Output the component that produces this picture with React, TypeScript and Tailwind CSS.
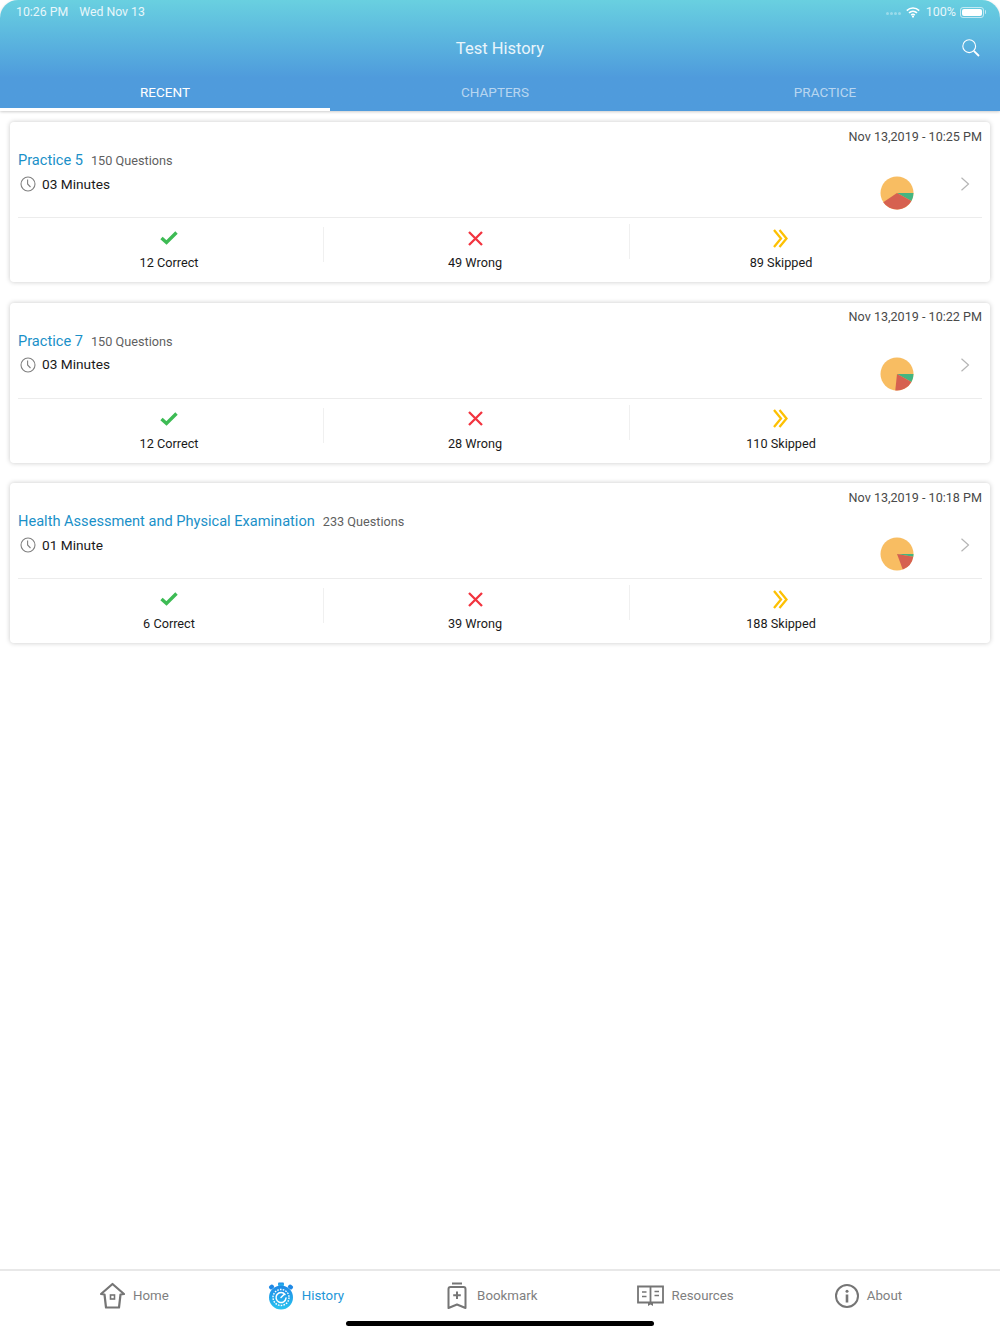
const tests = [
  { title: 'Practice 5', questions: 150, time: '03 Minutes', date: 'Nov 13,2019 - 10:25 PM', correct: 12, wrong: 49, skipped: 89 },
  { title: 'Practice 7', questions: 150, time: '03 Minutes', date: 'Nov 13,2019 - 10:22 PM', correct: 12, wrong: 28, skipped: 110 },
  { title: 'Health Assessment and Physical Examination', questions: 233, time: '01 Minute', date: 'Nov 13,2019 - 10:18 PM', correct: 6, wrong: 39, skipped: 188 },
];

function slice(from: number, to: number) {
  const r = 16.5;
  const a = (from * Math.PI) / 180;
  const b = (to * Math.PI) / 180;
  const large = to - from > 180 ? 1 : 0;
  return `M17 17 L${17 + r * Math.cos(a)} ${17 + r * Math.sin(a)} A${r} ${r} 0 ${large} 1 ${17 + r * Math.cos(b)} ${17 + r * Math.sin(b)} Z`;
}

function Pie({ correct, wrong, total }: { correct: number; wrong: number; total: number }) {
  const green = (correct / total) * 360;
  const red = green + (wrong / total) * 360;
  return (
    <svg width="34" height="34" viewBox="0 0 34 34">
      <circle cx="17" cy="17" r="16.5" fill="#f8bd62" />
      <path d={slice(0, green)} fill="#43b581" />
      <path d={slice(green, red)} fill="#d66150" />
    </svg>
  );
}

function HomeIcon() {
  return (
    <svg width="25" height="28" viewBox="0 0 25 28" fill="none" stroke="#757575" strokeWidth="2.2">
      <path d="M1 12 L12.5 2 L24 12 L20.5 12.5 L19 25.5 L6 25.5 L4.5 12.5 Z" strokeLinejoin="round" />
      <rect x="10.5" y="13" width="4" height="4" strokeWidth="1.6" />
    </svg>
  );
}

function HistoryIcon() {
  return (
    <svg width="26" height="28" viewBox="0 0 26 28" fill="none">
      <defs>
        <linearGradient id="hist" x1="0" y1="0" x2="0" y2="1">
          <stop offset="0" stopColor="#1e88e5" />
          <stop offset="1" stopColor="#29c4f0" />
        </linearGradient>
      </defs>
      <rect x="10" y="0.5" width="6" height="3.5" rx="1" fill="url(#hist)" />
      <rect x="1" y="3" width="5" height="4" rx="1.5" fill="#1e88e5" transform="rotate(-40 3.5 5)" />
      <rect x="20" y="3" width="5" height="4" rx="1.5" fill="#1e88e5" transform="rotate(40 22.5 5)" />
      <circle cx="13" cy="15.5" r="12" fill="url(#hist)" />
      <circle cx="13" cy="15.5" r="8" stroke="#fff" strokeWidth="1.4" strokeDasharray="1.6 1.2" />
      <path d="M17 12.5 A5 5 0 1 0 18 16 M13 15.5 L16 12.5" stroke="#fff" strokeWidth="1.5" strokeLinecap="round" />
    </svg>
  );
}

function BookmarkIcon() {
  return (
    <svg width="20" height="28" viewBox="0 0 20 28" fill="none" stroke="#757575" strokeWidth="2">
      <path d="M5 1.5 H15" />
      <path d="M3.5 5 H16.5 Q18.5 5 18.5 7 V26 L10 22.5 L1.5 26 V7 Q1.5 5 3.5 5 Z" strokeLinejoin="round" />
      <path d="M10 9.5 V17 M6.2 13.2 H13.8" />
    </svg>
  );
}

function ResourcesIcon() {
  return (
    <svg width="27" height="22" viewBox="0 0 27 22" fill="none" stroke="#757575" strokeWidth="1.8">
      <path d="M1 1.5 H26 V17.5 H1 Z" />
      <path d="M13.5 1.5 V17.5" />
      <path d="M5 7 H9.5 M5 11.5 H9.5 M17.5 6.5 H22 M17.5 10.5 H22" strokeWidth="1.5" />
      <path d="M11 17.5 H16 V21 L13.5 19.5 L11 21 Z" fill="#757575" stroke="none" />
    </svg>
  );
}

function AboutIcon() {
  return (
    <svg width="24" height="24" viewBox="0 0 24 24" fill="none" stroke="#757575">
      <circle cx="12" cy="12" r="11" strokeWidth="2" />
      <circle cx="12" cy="7.2" r="1.5" fill="#757575" stroke="none" />
      <path d="M12 10.5 V18.5" strokeWidth="2.6" />
    </svg>
  );
}

function Stat({ icon, label }: { icon: React.ReactNode; label: string }) {
  return (
    <div className="w-[305px] pr-[3px] flex flex-col items-center pt-[9px]">
      <div className="h-[22px] flex items-center justify-center">{icon}</div>
      <div className="mt-[4px] text-[12.7px] leading-[20px] text-[#1a1a1a]">{label}</div>
    </div>
  );
}

function Card({ t }: { t: (typeof tests)[number] }) {
  return (
    <div className="h-[160px] bg-white rounded-[4px] shadow-[0_0_5px_rgba(0,0,0,0.22)] px-2">
      <div className="h-[96px] border-b border-[#ececec] flex">
        <div className="flex-1 min-w-0 pt-[28px]">
          <div className="flex items-center h-[22px]">
            <span className="text-[14.6px] text-[#1a90c8]">{t.title}</span>
            <span className="ml-2 text-[12.7px] text-[#5f5f5f]">{t.questions} Questions</span>
          </div>
          <div className="flex items-center mt-[1px] h-[22px]">
            <svg width="16" height="16" viewBox="0 0 16 16" fill="none" stroke="#808080" strokeWidth="1.1" className="ml-[2px]">
              <circle cx="8" cy="8" r="7" />
              <path d="M7.6 3.5 V8 L10.5 11" />
            </svg>
            <span className="ml-[6px] text-[13.7px] text-[#1a1a1a]">{t.time}</span>
          </div>
        </div>
        <div className="flex flex-col items-end">
          <div className="h-[29px] pt-[1px] flex items-center text-[12.6px] text-[#4a4a4a]">{t.date}</div>
          <div className="flex items-start mt-[25px] mr-[12px]">
            <Pie correct={t.correct} wrong={t.wrong} total={t.questions} />
            <svg width="10" height="14" viewBox="0 0 10 14" fill="none" stroke="#b5b5b5" strokeWidth="1.2" className="ml-[46px] mt-px">
              <path d="M1.5 0.8 L8.5 7 L1.5 13.2" />
            </svg>
          </div>
        </div>
      </div>
      <div className="flex">
        <Stat
          label={`${t.correct} Correct`}
          icon={
            <svg width="18" height="14" viewBox="0 0 18 14" fill="none" stroke="#3dbb54" strokeWidth="3.4">
              <path d="M1.5 7 L6.5 11.5 L16.5 1.5" />
            </svg>
          }
        />
        <div className="w-px h-[35px] mt-[9px] bg-[#f0f0f0]" />
        <Stat
          label={`${t.wrong} Wrong`}
          icon={
            <svg width="15" height="15" viewBox="0 0 15 15" fill="none" stroke="#f2343f" strokeWidth="2.3">
              <path d="M1 1 L14 14 M14 1 L1 14" />
            </svg>
          }
        />
        <div className="w-px h-[35px] mt-[6px] bg-[#f0f0f0]" />
        <Stat
          label={`${t.skipped} Skipped`}
          icon={
            <svg width="16" height="19" viewBox="0 0 16 19" fill="none" stroke="#fdc003" strokeWidth="2.3">
              <path d="M1 1 L8 9.5 L1 18 M6.5 1 L13.5 9.5 L6.5 18" />
            </svg>
          }
        />
      </div>
    </div>
  );
}

export default function App() {
  return (
    <div className="h-[1334px] w-[1000px] bg-white flex flex-col overflow-hidden font-['Roboto',sans-serif]">
      {/* Header */}
      <div className="h-[111px] shrink-0 rounded-t-[18px] bg-gradient-to-b from-[#69d0e0] to-[#4f9bdc] to-[70%] text-white shadow-[0_1px_3px_rgba(0,0,0,0.2)]">
        <div className="h-[24px] flex items-center pl-4 pr-[14px] text-[12.3px] text-[#e8f6fa]">
          <span>10:26 PM</span>
          <span className="ml-[11px]">Wed Nov 13</span>
          <div className="ml-auto flex items-center">
            <div className="flex gap-[1.5px] mr-[5px] mt-[3px]">
              <span className="w-[2.5px] h-[2.5px] rounded-full bg-white/35" />
              <span className="w-[2.5px] h-[2.5px] rounded-full bg-white/35" />
              <span className="w-[2.5px] h-[2.5px] rounded-full bg-white/35" />
              <span className="w-[2.5px] h-[2.5px] rounded-full bg-white/35" />
            </div>
            <svg width="14" height="11" viewBox="0 0 14 11" fill="none" stroke="#ffffff" strokeWidth="1.6">
              <path d="M0.8 3.6 C4.4 0.2 9.6 0.2 13.2 3.6" />
              <path d="M3 5.9 C5.3 3.8 8.7 3.8 11 5.9" />
              <path d="M5.2 8.1 C6.3 7.1 7.7 7.1 8.8 8.1" />
              <circle cx="7" cy="9.6" r="1.1" fill="#ffffff" stroke="none" />
            </svg>
            <span className="ml-[6px] text-[12.5px]">100%</span>
            <div className="ml-[4px] w-[24px] h-[11px] rounded-[3px] border border-white/60 p-[1px]">
              <div className="w-full h-full rounded-[2px] bg-white" />
            </div>
            <div className="w-[1.5px] h-[4px] bg-white/60 rounded-r ml-[0.5px]" />
          </div>
        </div>
        <div className="h-[48px] flex items-center justify-center relative">
          <span className="text-[16.5px] text-[#e9f5fb] mt-[3px]">Test History</span>
          <svg width="18" height="18" viewBox="0 0 18 18" fill="none" stroke="#ffffff" className="absolute right-[20px] top-[15px]">
            <circle cx="7.2" cy="7.2" r="6.4" strokeWidth="1.1" />
            <path d="M11.8 11.8 L17 17" strokeWidth="1.8" />
          </svg>
        </div>
        <div className="flex h-[39px]">
          <div className="w-[330px] flex items-start justify-center pt-[10px] border-b-[3px] border-white text-[13.5px] leading-[20px] text-white">RECENT</div>
          <div className="w-[330px] flex items-start justify-center pt-[10px] text-[13.5px] leading-[20px] text-white/60">CHAPTERS</div>
          <div className="w-[330px] flex items-start justify-center pt-[10px] text-[13.5px] leading-[20px] text-white/60">PRACTICE</div>
        </div>
      </div>

      {/* Test list */}
      <div className="flex-1 pt-[11px] px-[10px] flex flex-col gap-[20.5px]">
        {tests.map((t) => (
          <Card key={t.title} t={t} />
        ))}
      </div>

      {/* Tab bar */}
      <div className="h-[65px] shrink-0 border-t-2 border-[#e8e8e8] relative">
        <div className="h-[49px] pl-[100px] flex items-center text-[13.3px] text-[#7f7f7f]">
          <div className="flex items-center gap-2"><HomeIcon />Home</div>
          <div className="ml-[99px] flex items-center gap-2 text-[#2196d8]"><HistoryIcon />History</div>
          <div className="ml-[103px] flex items-center gap-[10px]"><BookmarkIcon />Bookmark</div>
          <div className="ml-[100px] flex items-center gap-[7px]"><ResourcesIcon />Resources</div>
          <div className="ml-[101px] flex items-center gap-2"><AboutIcon />About</div>
        </div>
        <div className="absolute left-[346px] bottom-[8px] w-[308px] h-[5px] rounded-full bg-black" />
      </div>
    </div>
  );
}
